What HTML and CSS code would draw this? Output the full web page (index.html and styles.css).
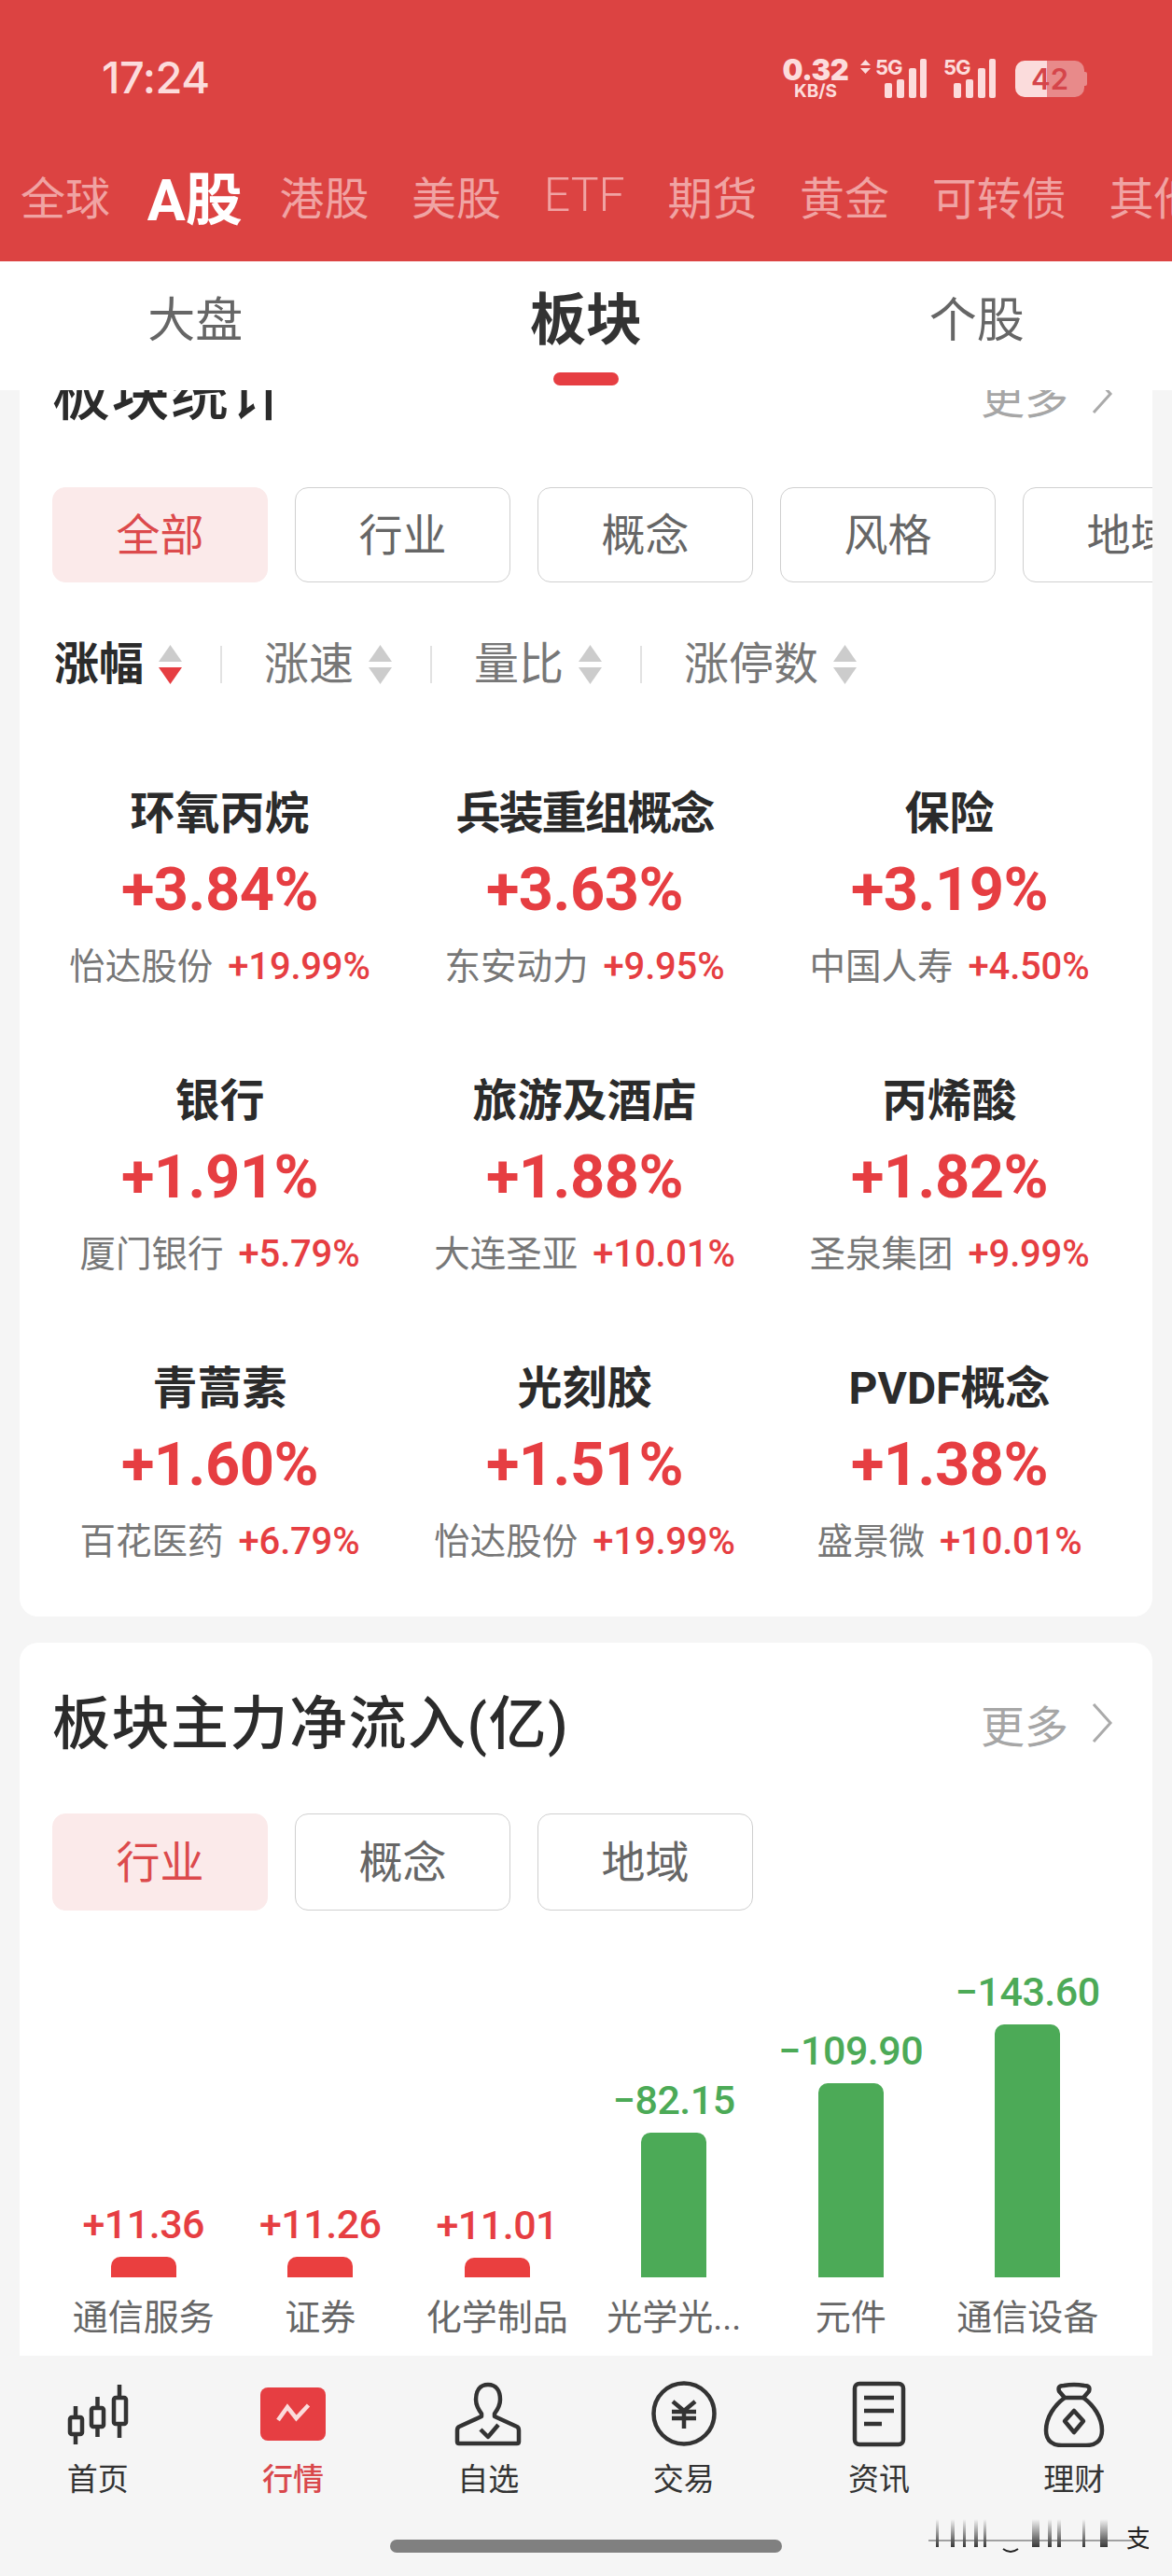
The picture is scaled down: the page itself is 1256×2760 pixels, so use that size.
FILE: index.html
```html
<!DOCTYPE html>
<html lang="zh-CN">
<head>
  <meta charset="UTF-8" />
  <meta name="viewport" content="width=device-width, initial-scale=1.0"/>
  <title>行情 板块</title>
  <link rel="stylesheet" href="styles.css">
</head>
<body>

<header class="top">
  <div class="status">
    <span class="clock">17:24</span>
    <div class="status-right">
      <div class="speed"><b>0.32</b><small>KB/S</small></div>
      <svg class="signal signal-first" width="72" height="44" viewBox="0 0 72 44">
        <path d="M1 8 L6.5 2 L12 8 Z M1 11 H12 L6.500 17 Z" fill="#fcdcdc"/>
        <text x="17" y="18" class="net">5G</text>
        <rect x="27" y="27" width="8" height="16" rx="2"/>
        <rect x="40" y="23" width="8" height="20" rx="2"/>
        <rect x="53" y="11" width="8" height="32" rx="2"/>
        <rect x="65" y="1" width="7" height="42" rx="2"/>
      </svg>
      <svg class="signal" width="56" height="44" viewBox="0 0 56 44">
        <text x="0" y="18" class="net">5G</text>
        <rect x="11" y="27" width="8" height="16" rx="2"/>
        <rect x="24" y="23" width="8" height="20" rx="2"/>
        <rect x="37" y="11" width="8" height="32" rx="2"/>
        <rect x="49" y="1" width="7" height="42" rx="2"/>
      </svg>
      <div class="battery">42</div>
    </div>
  </div>
  <nav class="markets">
    <span>全球</span>
    <span class="on">A股</span>
    <span>港股</span>
    <span>美股</span>
    <span class="thin">ETF</span>
    <span>期货</span>
    <span>黄金</span>
    <span>可转债</span>
    <span>其他</span>
  </nav>
</header>

<div class="subtabs">
  <div class="subtab">大盘</div>
  <div class="subtab on">板块<i></i></div>
  <div class="subtab">个股</div>
</div>

<main class="content">
  <section class="card card-stats">
    <div class="card-head">
      <h2>板块统计</h2>
      <div class="more">更多
        <svg width="24" height="44" viewBox="0 0 24 44"><path d="M3 2 L21 22 L3 42" fill="none" stroke="#aaa" stroke-width="3"/></svg>
      </div>
    </div>

    <div class="pills">
      <div class="pill on">全部</div>
      <div class="pill">行业</div>
      <div class="pill">概念</div>
      <div class="pill">风格</div>
      <div class="pill">地域</div>
    </div>

    <div class="sorts">
      <div class="sort on">涨幅
        <svg width="25" height="42" viewBox="0 0 25 42"><path d="M12.500 0 L25 18 H0 Z" fill="#ccc"/><path d="M0 24 H25 L12.500 42 Z" fill="#e63e42"/></svg>
      </div>
      <div class="sort">涨速
        <svg width="25" height="42" viewBox="0 0 25 42"><path d="M12.500 0 L25 18 H0 Z" fill="#ccc"/><path d="M0 24 H25 L12.500 42 Z" fill="#ccc"/></svg>
      </div>
      <div class="sort">量比
        <svg width="25" height="42" viewBox="0 0 25 42"><path d="M12.500 0 L25 18 H0 Z" fill="#ccc"/><path d="M0 24 H25 L12.500 42 Z" fill="#ccc"/></svg>
      </div>
      <div class="sort">涨停数
        <svg width="25" height="42" viewBox="0 0 25 42"><path d="M12.500 0 L25 18 H0 Z" fill="#ccc"/><path d="M0 24 H25 L12.500 42 Z" fill="#ccc"/></svg>
      </div>
    </div>

    <div class="sectors">
      <div class="sector">
        <h3>环氧丙烷</h3>
        <div class="pct">+3.84%</div>
        <div class="lead"><span>怡达股份</span><b>+19.99%</b></div>
      </div>
      <div class="sector">
        <h3 class="tight">兵装重组概念</h3>
        <div class="pct">+3.63%</div>
        <div class="lead"><span>东安动力</span><b>+9.95%</b></div>
      </div>
      <div class="sector">
        <h3>保险</h3>
        <div class="pct">+3.19%</div>
        <div class="lead"><span>中国人寿</span><b>+4.50%</b></div>
      </div>
      <div class="sector">
        <h3>银行</h3>
        <div class="pct">+1.91%</div>
        <div class="lead"><span>厦门银行</span><b>+5.79%</b></div>
      </div>
      <div class="sector">
        <h3>旅游及酒店</h3>
        <div class="pct">+1.88%</div>
        <div class="lead"><span>大连圣亚</span><b>+10.01%</b></div>
      </div>
      <div class="sector">
        <h3>丙烯酸</h3>
        <div class="pct">+1.82%</div>
        <div class="lead"><span>圣泉集团</span><b>+9.99%</b></div>
      </div>
      <div class="sector">
        <h3>青蒿素</h3>
        <div class="pct">+1.60%</div>
        <div class="lead"><span>百花医药</span><b>+6.79%</b></div>
      </div>
      <div class="sector">
        <h3>光刻胶</h3>
        <div class="pct">+1.51%</div>
        <div class="lead"><span>怡达股份</span><b>+19.99%</b></div>
      </div>
      <div class="sector">
        <h3>PVDF概念</h3>
        <div class="pct">+1.38%</div>
        <div class="lead"><span>盛景微</span><b>+10.01%</b></div>
      </div>
    </div>
  </section>

  <section class="card card-flow">
    <div class="card-head">
      <h2>板块主力净流入(亿)</h2>
      <div class="more">更多
        <svg width="24" height="44" viewBox="0 0 24 44"><path d="M3 2 L21 22 L3 42" fill="none" stroke="#aaa" stroke-width="3"/></svg>
      </div>
    </div>

    <div class="pills">
      <div class="pill on">行业</div>
      <div class="pill">概念</div>
      <div class="pill">地域</div>
    </div>

    <div class="chart">
      <div class="col up">
        <div class="val">+11.36</div>
        <div class="bar" style="height: 22px"></div>
        <div class="name">通信服务</div>
      </div>
      <div class="col up">
        <div class="val">+11.26</div>
        <div class="bar" style="height: 22px"></div>
        <div class="name">证券</div>
      </div>
      <div class="col up">
        <div class="val">+11.01</div>
        <div class="bar" style="height: 21px"></div>
        <div class="name">化学制品</div>
      </div>
      <div class="col down">
        <div class="val">−82.15</div>
        <div class="bar" style="height: 155px"></div>
        <div class="name">光学光...</div>
      </div>
      <div class="col down">
        <div class="val">−109.90</div>
        <div class="bar" style="height: 208px"></div>
        <div class="name">元件</div>
      </div>
      <div class="col down">
        <div class="val">−143.60</div>
        <div class="bar" style="height: 271px"></div>
        <div class="name">通信设备</div>
      </div>
    </div>
  </section>
</main>

<footer class="tabbar">
  <div class="tab">
    <svg width="70" height="70" viewBox="0 0 70 70" fill="none" stroke="#333" stroke-width="4.500">
      <path d="M11 27 V39 M11 57 V68 M34.500 17 V29 M34.500 49 V60 M58 4 V18 M58 46 V61"/>
      <rect x="5" y="39" width="13" height="18" rx="2"/>
      <rect x="28" y="29" width="13" height="20" rx="2"/>
      <rect x="52" y="18" width="13" height="28" rx="2"/>
    </svg>
    <span>首页</span>
  </div>
  <div class="tab on">
    <svg width="70" height="70" viewBox="0 0 70 70" fill="none">
      <rect x="0" y="7" width="70" height="57" rx="8" fill="#e63e42"/>
      <path d="M19 42 L29 28 L38.500 40 L51.500 26" stroke="#fbdcdc" stroke-width="4.500"/>
    </svg>
    <span>行情</span>
  </div>
  <div class="tab">
    <svg width="72" height="70" viewBox="0 0 72 70" fill="none" stroke="#333" stroke-width="4.500" stroke-linejoin="round">
      <path d="M36 4 C27 4 23 11 23 20 C23 27 26 31 29 35 V38 L5 49 Q3 50 3 53 V65 Q3 67 5 67 H67 Q69 67 69 65 V53 Q69 50 67 49 L43 38 V35 C46 31 49 27 49 20 C49 11 45 4 36 4 Z"/>
      <path d="M28 52 L36 60 L47 47"/>
    </svg>
    <span>自选</span>
  </div>
  <div class="tab">
    <svg width="70" height="70" viewBox="0 0 70 70" fill="none" stroke="#333" stroke-width="4.500">
      <circle cx="35" cy="35" r="32.500"/>
      <path d="M23 22 L35 32 L47 22 M22 33 H48 M22 40 H48 M35 32 V51"/>
    </svg>
    <span>交易</span>
  </div>
  <div class="tab">
    <svg width="70" height="70" viewBox="0 0 70 70" fill="none" stroke="#333" stroke-width="4.500">
      <rect x="9" y="3" width="52" height="65" rx="5"/>
      <path d="M19 18 H51 M19 32 H51 M19 46 H38"/>
    </svg>
    <span>资讯</span>
  </div>
  <div class="tab">
    <svg width="70" height="72" viewBox="0 0 70 72" fill="none" stroke="#333" stroke-width="4.500" stroke-linejoin="round">
      <path d="M25 19 L19 12 Q17 6 24 6 Q35 4 46 6 Q53 6 51 12 L45 19 Z"/>
      <path d="M25 19 C14 27 5 40 5 54 C5 66 13 70 22 70 H48 C57 70 65 66 65 54 C65 40 56 27 45 19"/>
      <path d="M35 33 L45 44 L35 56 L25 44 Z"/>
    </svg>
    <span>理财</span>
  </div>

  <div class="home-bar"></div>

  <!-- smeared watermark in the corner -->
  <svg class="mark" width="236" height="40" viewBox="0 0 236 40" fill="none">
    <defs>
      <linearGradient id="smear" x1="0" y1="0" x2="0" y2="1">
        <stop offset="0" stop-color="#222" stop-opacity="0"/>
        <stop offset="1" stop-color="#222" stop-opacity="0.9"/>
      </linearGradient>
    </defs>
    <rect x="8" y="2" width="3" height="30" fill="url(#smear)"/>
    <rect x="24" y="2" width="4" height="30" fill="url(#smear)"/>
    <rect x="37" y="2" width="3" height="30" fill="url(#smear)"/>
    <rect x="49" y="2" width="4" height="30" fill="url(#smear)"/>
    <rect x="59" y="2" width="3" height="30" fill="url(#smear)"/>
    <path d="M80 34 Q88 40 96 34" stroke="#222" stroke-width="2"/>
    <rect x="111" y="2" width="8" height="30" fill="url(#smear)"/>
    <rect x="128" y="2" width="4" height="30" fill="url(#smear)"/>
    <rect x="138" y="2" width="4" height="30" fill="url(#smear)"/>
    <rect x="165" y="2" width="3" height="30" fill="url(#smear)"/>
    <rect x="184" y="2" width="8" height="30" fill="url(#smear)"/>
    <path d="M0 25 H222" stroke="#555" stroke-width="1.500" opacity="0.700"/>
    <text x="212" y="32" class="mark-text">支</text>
  </svg>
</footer>

</body>
</html>
```

FILE: styles.css
```css
* {
  box-sizing: border-box;
}
html, body {
  margin: 0;
  padding: 0;
}
body {
  width: 1256px;
  height: 2760px;
  overflow: hidden;
  display: flex;
  flex-direction: column;
  font-family: Roboto, "Noto Sans CJK SC", sans-serif;
  background-color: #f5f5f5;
  color: #333;
}

/* red header */
.top {
  height: 280px;
  flex-shrink: 0;
  background-color: #dc4342;
}
.status {
  display: flex;
  justify-content: space-between;
  height: 178px;
  padding: 58px 94px 0 109px;
}
.clock {
  font-family: Inter, sans-serif;
  font-size: 47px;
  line-height: 50px;
  font-weight: 500;
  letter-spacing: -0.5px;
  color: #fcdcdc;
}
.status-right {
  display: flex;
  align-items: flex-start;
  height: 50px;
  margin-top: 4px;
  color: #fcdcdc;
}
.speed {
  display: flex;
  flex-direction: column;
  align-items: center;
  width: 70px;
  font-family: Inter, sans-serif;
  font-weight: 700;
}
.speed b {
  font-size: 31px;
  line-height: 26px;
  letter-spacing: -0.5px;
}
.speed small {
  font-size: 19px;
  line-height: 19px;
}
.signal {
  margin-left: 12px;
  fill: #fcdcdc;
  overflow: visible;
}
.signal + .signal {
  margin-left: 18px;
}
.net {
  font-family: Inter, sans-serif;
  font-size: 22px;
  font-weight: 700;
  letter-spacing: -1px;
}
.battery {
  position: relative;
  width: 74px;
  height: 39px;
  margin: 3px 0 0 21px;
  border-radius: 10px;
  background: linear-gradient(90deg, #fbdcdc 46%, #e88a8a 46%);
  font-family: Inter, sans-serif;
  font-size: 31px;
  line-height: 39px;
  font-weight: 600;
  text-align: center;
  color: #d5454a;
}
/* battery nub */
.battery::after {
  content: "";
  position: absolute;
  right: -3px;
  top: 12px;
  width: 3px;
  height: 15px;
  border-radius: 0 2px 2px 0;
  background-color: #e88a8a;
}
.markets {
  display: flex;
  align-items: center;
  gap: 45.700px;
  height: 62px;
  padding-left: 22px;
  white-space: nowrap;
  font-size: 48px;
  color: #f0a3a3;
}
.markets .on {
  font-size: 61px;
  font-weight: 700;
  color: #fff;
  margin: 0 -6px;
}
.markets .thin {
  font-family: Roboto, sans-serif;
  font-weight: 300;
  font-size: 50px;
}

/* 大盘 板块 个股 */
.subtabs {
  display: grid;
  grid-template-columns: repeat(3, 1fr);
  height: 138px;
  flex-shrink: 0;
  background-color: #fff;
  position: relative;
  z-index: 1;
}
.subtab {
  display: flex;
  flex-direction: column;
  align-items: center;
  padding-top: 29px;
  font-size: 51px;
  line-height: 70px;
  color: #666;
}
.subtab.on {
  font-size: 60px;
  font-weight: 700;
  color: #333;
}
.subtab i {
  display: block;
  width: 70px;
  height: 14px;
  margin-top: 20px;
  border-radius: 7px;
  background-color: #e63e42;
}

/* scrolled content, first card is cut off at the top */
.content {
  flex: 1;
  min-height: 0;
  overflow: hidden;
  padding: 0 21px;
}
.card {
  position: relative;
  overflow: hidden;
  padding: 58px 0 0 35px;
  background-color: #fff;
  border-radius: 20px;
}
.card-stats {
  margin-top: -82px;
  padding-bottom: 55px;
}
.card-flow {
  margin-top: 28px;
  height: 900px;
}
.card-head {
  display: flex;
  justify-content: space-between;
  align-items: center;
  height: 60px;
  padding: 0 42px 0 0;
}
h2 {
  margin: 0;
  font-size: 62px;
  line-height: 60px;
  font-weight: 500;
  letter-spacing: 1.500px;
  color: #2b2b2b;
  white-space: nowrap;
}
.more {
  display: flex;
  align-items: center;
  gap: 24px;
  margin-top: -4px;
  font-size: 47px;
  color: #a6a6a6;
}

.pills {
  display: flex;
  gap: 29px;
  margin-top: 68px;
}
.card-flow .pills {
  margin-top: 65px;
}
.pill {
  flex-shrink: 0;
  width: 231px;
  height: 102px;
  border: 1px solid #cfcfcf;
  border-radius: 14px;
  font-size: 47px;
  line-height: 102px;
  text-align: center;
  color: #666;
}
.card-flow .pill {
  height: 104px;
  line-height: 104px;
}
.pill.on {
  border-color: #fbeaea;
  background-color: #fbeaea;
  color: #dc4a4c;
}

.sorts {
  display: flex;
  align-items: center;
  margin-top: 63px;
  padding-left: 2px;
}
.sort {
  display: flex;
  align-items: center;
  gap: 16px;
  padding-right: 43px;
  margin-right: 45px;
  height: 50px;
  font-size: 48px;
  line-height: 50px;
  color: #777;
  position: relative;
}
.sort.on {
  font-weight: 700;
  color: #2b2b2b;
}
/* thin divider after each sort key */
.sort::after {
  content: "";
  position: absolute;
  right: 0;
  top: 5px;
  width: 2px;
  height: 40px;
  background-color: #e2e2e2;
}
.sort:last-child::after {
  display: none;
}

.sectors {
  display: grid;
  grid-template-columns: repeat(3, 391px);
  row-gap: 89px;
  margin: 105px 0 0 -16px;
}
.sector {
  text-align: center;
}
h3 {
  margin: 0;
  font-size: 48px;
  line-height: 60px;
  font-weight: 700;
  color: #2b2b2b;
}
h3.tight {
  letter-spacing: -2px;
}
.pct {
  margin-top: 11px;
  font-size: 65px;
  line-height: 80px;
  font-weight: 700;
  letter-spacing: -0.5px;
  color: #e63e42;
}
.lead {
  display: flex;
  justify-content: center;
  gap: 16px;
  margin-top: 18px;
  font-size: 38.500px;
  line-height: 50px;
  color: #777;
}
.lead b {
  font-size: 40px;
  font-weight: 500;
  letter-spacing: -0.2px;
  color: #e63e42;
}

/* bars */
.chart {
  display: flex;
  align-items: flex-end;
  width: 1137px;
  margin: 62px 0 0 3px;
}
.col {
  display: flex;
  flex-direction: column;
  align-items: center;
  width: 189.500px;
}
.val {
  margin-bottom: 10px;
  font-size: 43px;
  line-height: 50px;
  font-weight: 500;
  letter-spacing: -0.5px;
  white-space: nowrap;
}
.bar {
  width: 70px;
  border-radius: 10px 10px 0 0;
}
.name {
  margin-top: 18px;
  font-size: 38px;
  line-height: 50px;
  color: #666;
  white-space: nowrap;
}
.up .val {
  color: #e63e42;
}
.up .bar {
  background-color: #ea3f3f;
}
.down .val {
  color: #4caa57;
}
.down .bar {
  background-color: #4caa57;
}

/* bottom nav */
.tabbar {
  position: relative;
  display: grid;
  grid-template-columns: repeat(6, 1fr);
  align-items: start;
  height: 236px;
  flex-shrink: 0;
  padding-top: 26px;
  background-color: #f5f5f5;
}
.tab {
  display: flex;
  flex-direction: column;
  align-items: center;
  font-size: 33px;
  line-height: 40px;
  color: #333;
}
.tab svg {
  height: 72px;
  margin-bottom: 15px;
}
.tab.on span {
  font-weight: 500;
  color: #d9484c;
}
.home-bar {
  position: absolute;
  left: 418px;
  top: 197px;
  width: 420px;
  height: 14px;
  border-radius: 7px;
  background-color: #808080;
}
.mark {
  position: absolute;
  left: 995px;
  top: 173px;
}
.mark-text {
  font-size: 26px;
  fill: #222;
}
```
